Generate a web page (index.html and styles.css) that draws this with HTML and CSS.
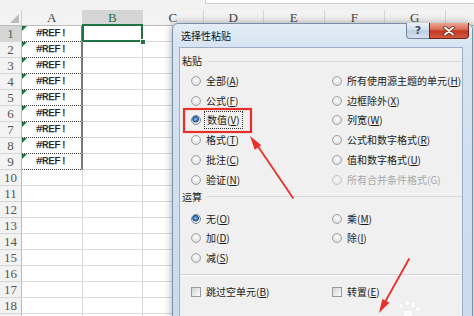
FILE: index.html
```html
<!DOCTYPE html>
<html>
<head>
<meta charset="utf-8">
<link rel="stylesheet" href="styles.css">
</head>
<body>
<div class="topbar"><div class="fx"></div></div>
<div class="sheet">
  <div class="hrow">
    <div class="corner"></div>
    <div class="ch">A</div><div class="ch sel">B</div><div class="ch">C</div><div class="ch">D</div><div class="ch">E</div><div class="ch">F</div><div class="ch">G</div><div class="ch"></div>
  </div>
  <div class="row"><div class="rh sel">1</div><div class="c a"><i class="tri"></i>#REF!</div><div class="c b1"><i class="handle"></i></div><div class="c"></div></div>
  <div class="row"><div class="rh">2</div><div class="c a"><i class="tri"></i>#REF!</div><div class="c"></div><div class="c"></div></div>
  <div class="row"><div class="rh">3</div><div class="c a"><i class="tri"></i>#REF!</div><div class="c"></div><div class="c"></div></div>
  <div class="row"><div class="rh">4</div><div class="c a"><i class="tri"></i>#REF!</div><div class="c"></div><div class="c"></div></div>
  <div class="row"><div class="rh">5</div><div class="c a"><i class="tri"></i>#REF!</div><div class="c"></div><div class="c"></div></div>
  <div class="row"><div class="rh">6</div><div class="c a"><i class="tri"></i>#REF!</div><div class="c"></div><div class="c"></div></div>
  <div class="row"><div class="rh">7</div><div class="c a"><i class="tri"></i>#REF!</div><div class="c"></div><div class="c"></div></div>
  <div class="row"><div class="rh">8</div><div class="c a"><i class="tri"></i>#REF!</div><div class="c"></div><div class="c"></div></div>
  <div class="row"><div class="rh">9</div><div class="c a"><i class="tri"></i>#REF!</div><div class="c"></div><div class="c"></div></div>
  <div class="row"><div class="rh">10</div><div class="c"></div><div class="c"></div><div class="c"></div></div>
  <div class="row"><div class="rh">11</div><div class="c"></div><div class="c"></div><div class="c"></div></div>
  <div class="row"><div class="rh">12</div><div class="c"></div><div class="c"></div><div class="c"></div></div>
  <div class="row"><div class="rh">13</div><div class="c"></div><div class="c"></div><div class="c"></div></div>
  <div class="row"><div class="rh">14</div><div class="c"></div><div class="c"></div><div class="c"></div></div>
  <div class="row"><div class="rh">15</div><div class="c"></div><div class="c"></div><div class="c"></div></div>
  <div class="row"><div class="rh">16</div><div class="c"></div><div class="c"></div><div class="c"></div></div>
  <div class="row"><div class="rh">17</div><div class="c"></div><div class="c"></div><div class="c"></div></div>
  <div class="row"><div class="rh">18</div><div class="c"></div><div class="c"></div><div class="c"></div></div>
  <div class="row"><div class="rh"></div><div class="c"></div><div class="c"></div><div class="c"></div></div>
</div>

<div class="dlg">
  <div class="caps">
    <div class="cap help">?</div>
    <div class="cap close"><svg width="12" height="10" viewBox="0 0 12 10"><path d="M2 1.5L10 8.5M10 1.5L2 8.5" stroke="#5a1a10" stroke-width="3.4" stroke-linecap="round"/><path d="M2 1.5L10 8.5M10 1.5L2 8.5" stroke="#fff" stroke-width="2" stroke-linecap="round"/></svg></div>
  </div>
  <div class="title">选择性粘贴</div>
  <div class="body">
    <div class="head">粘贴</div>
    <div class="opts">
      <div class="opt"><i class="radio"></i><span>全部(<u>A</u>)</span></div>
      <div class="opt"><i class="radio"></i><span>所有使用源主题的单元(<u>H</u>)</span></div>
      <div class="opt"><i class="radio"></i><span>公式(<u>F</u>)</span></div>
      <div class="opt"><i class="radio"></i><span>边框除外(<u>X</u>)</span></div>
      <div class="opt"><i class="radio on"></i><span class="focus">数值(<u>V</u>)</span></div>
      <div class="opt"><i class="radio"></i><span>列宽(<u>W</u>)</span></div>
      <div class="opt"><i class="radio"></i><span>格式(<u>T</u>)</span></div>
      <div class="opt"><i class="radio"></i><span>公式和数字格式(<u>R</u>)</span></div>
      <div class="opt"><i class="radio"></i><span>批注(<u>C</u>)</span></div>
      <div class="opt"><i class="radio"></i><span>值和数字格式(<u>U</u>)</span></div>
      <div class="opt"><i class="radio"></i><span>验证(<u>N</u>)</span></div>
      <div class="opt dis"><i class="radio"></i><span>所有合并条件格式(G)</span></div>
    </div>
    <div class="head">运算</div>
    <div class="opts ops">
      <div class="opt"><i class="radio on"></i><span>无(<u>O</u>)</span></div>
      <div class="opt"><i class="radio"></i><span>乘(<u>M</u>)</span></div>
      <div class="opt"><i class="radio"></i><span>加(<u>D</u>)</span></div>
      <div class="opt"><i class="radio"></i><span>除(<u>I</u>)</span></div>
      <div class="opt"><i class="radio"></i><span>减(<u>S</u>)</span></div>
    </div>
    <div class="sep"></div>
    <div class="opts checks">
      <div class="opt"><i class="check"></i><span>跳过空单元(<u>B</u>)</span></div>
      <div class="opt"><i class="check"></i><span>转置(<u>E</u>)</span></div>
    </div>
  </div>
</div>

<svg class="overlay" width="474" height="316" viewBox="0 0 474 316">
  <rect x="184" y="109" width="67" height="23" fill="none" stroke="#e8302a" stroke-width="2.2"/>
  <line x1="293" y1="198" x2="257" y2="145" stroke="#e8302a" stroke-width="1.8" stroke-linecap="round"/>
  <polygon points="250,136 261.3,145.2 254.7,149.8" fill="#e8302a"/>
  <line x1="409" y1="259" x2="385" y2="302" stroke="#e8302a" stroke-width="1.8" stroke-linecap="round"/>
  <polygon points="379,313 389.3,302.7 382.3,298.9" fill="#e8302a"/>
  <g fill="#fbfbfb" stroke="#e2e2e2" stroke-width="0.6">
    <ellipse cx="401" cy="306" rx="2.6" ry="3.2"/>
    <ellipse cx="407" cy="303" rx="2.6" ry="3.2"/>
    <ellipse cx="413" cy="305" rx="2.6" ry="3.2"/>
    <ellipse cx="418" cy="309" rx="2.4" ry="3"/>
    <ellipse cx="408" cy="314" rx="5" ry="4"/>
  </g>
</svg>
</body>
</html>
```

FILE: styles.css
```css
* { box-sizing: border-box; margin: 0; padding: 0; }
html, body { width: 474px; height: 316px; overflow: hidden; background: #fff; }
body { position: relative; font-family: "Noto Sans CJK SC", "Noto Sans", sans-serif; }

.topbar { height: 10px; background: #f2f2f2; }
.fx { margin-left: 205px; height: 4px; background: #fff; border-left: 1px solid #cfcfcf; border-bottom: 1px solid #cfcfcf; }

.sheet { display: flex; flex-direction: column; }
.hrow, .row { display: flex; height: 16px; flex: none; }
.hrow { background: #f3f3f3; }
.corner { width: 22px; flex: none; position: relative; border-right: 1px solid #d0d0d0; border-bottom: 1px solid #bcbcbc; }
.corner::after { content: ""; position: absolute; right: 2px; bottom: 2px; border-style: solid; border-width: 0 0 9px 9px; border-color: transparent transparent #bdbdbd transparent; }
.ch { width: 60.5px; flex: none; border-right: 1px solid #d6d6d6; border-bottom: 1px solid #bcbcbc; font: 13px/15px "Liberation Serif", serif; color: #444; text-align: center; }
.ch.sel { background: #d5d5d5; color: #2f6f4a; border-bottom: 2px solid #217346; }
.rh { width: 22px; flex: none; background: #f3f3f3; border-right: 1px solid #bcbcbc; border-bottom: 1px solid #d6d6d6; font: 13px/16px "Liberation Serif", serif; color: #555; text-align: center; }
.rh.sel { background: #d5d5d5; color: #2f6f4a; }
.c { width: 60.5px; flex: none; position: relative; border-right: 1px solid #dadada; border-bottom: 1px solid #dadada; }
.a { font: 11px/15px "Liberation Mono", monospace; letter-spacing: -0.5px; color: #1a1a1a; text-align: center; -webkit-text-stroke: 0.25px #1a1a1a; border-bottom: 1px dotted #3a3a3a; border-right: 2px solid #777; }
.tri { position: absolute; left: 0; top: 0; border-style: solid; border-width: 5px 5px 0 0; border-color: #217346 transparent transparent transparent; }
.b1::after { content: ""; position: absolute; left: -1px; top: -2px; right: -1px; bottom: -1px; border: 2px solid #217346; }
.handle { position: absolute; right: -4px; bottom: -4px; width: 6px; height: 6px; background: #217346; border: 1px solid #fff; z-index: 2; }

.dlg { position: absolute; left: 172px; top: 23px; width: 301px; height: 300px; display: flex; flex-direction: column; padding: 0 9px 0 6px; border: 1px solid #7c90aa; border-radius: 6px 6px 0 0; background: linear-gradient(180deg, #e4edf7 0, #d6e3f2 24px, #cadbef 100%); box-shadow: 0 0 8px rgba(0, 0, 0, 0.35); }
.caps { position: absolute; top: -1px; right: 3px; display: flex; }
.cap { height: 16px; display: flex; align-items: center; justify-content: center; }
.help { width: 23px; border: 1px solid #74859b; border-right: none; border-top: none; border-radius: 0 0 0 4px; background: linear-gradient(180deg, #eaf1f9 0, #d1ddeb 48%, #bccde1 52%, #d6e2ef 100%); color: #3b4d63; font: bold 11px/14px "DejaVu Sans", sans-serif; }
.close { width: 40px; border: 1px solid #6c2419; border-top: none; border-radius: 0 0 4px 0; background: linear-gradient(180deg, #eba696 0, #d86a52 45%, #c4381f 52%, #d45b40 100%); }
.title { height: 23px; line-height: 23px; font-size: 10px; padding-left: 2px; color: #111; }

.body { flex: 1; background: #f0f0f0; border: 1px solid #9eadc2; padding: 6px 0 0 2px; font-size: 10px; color: #1b1b1b; }
.head { display: flex; align-items: center; gap: 5px; height: 14px; line-height: 14px; }
.head::after { content: ""; flex: 1; border-top: 1px solid #dadada; }
.opts { display: grid; grid-template-columns: 141px auto; grid-auto-rows: 19.8px; padding-left: 9px; margin-top: 3px; }
.ops { margin-top: 5px; }
.opt { display: flex; align-items: center; gap: 5px; white-space: nowrap; line-height: 14px; }
.opt u { text-decoration-thickness: 1px; text-underline-offset: 1px; }
.radio { width: 10px; height: 10px; flex: none; border-radius: 50%; border: 1px solid #a2a2a2; background: radial-gradient(circle at 50% 40%, #ffffff 0, #eeeeee 40%, #d2d2d2 100%); }
.radio.on { border-color: #7d8b9a; background: radial-gradient(circle at 45% 40%, #9fd0f5 0, #2e74b8 2px, #1d4f8a 3px, #e6e6e6 3.6px, #f4f4f4 100%); }
.check { width: 10px; height: 10px; flex: none; border: 1px solid #9a9a9a; background: linear-gradient(135deg, #d4d4d4 0, #ececec 60%, #fafafa 100%); }
.focus { outline: 1px dotted #333; outline-offset: 1px; padding: 0 1px; }
.dis { color: #a8a8a8; }
.dis .radio { opacity: 0.55; }
.sep { height: 0; margin: 6px 0 0 -2px; border-top: 1px solid #d6d6d6; border-bottom: 1px solid #fafafa; }
.checks { margin-top: 9px; grid-auto-rows: 14px; }

.overlay { position: absolute; left: 0; top: 0; pointer-events: none; }
```
